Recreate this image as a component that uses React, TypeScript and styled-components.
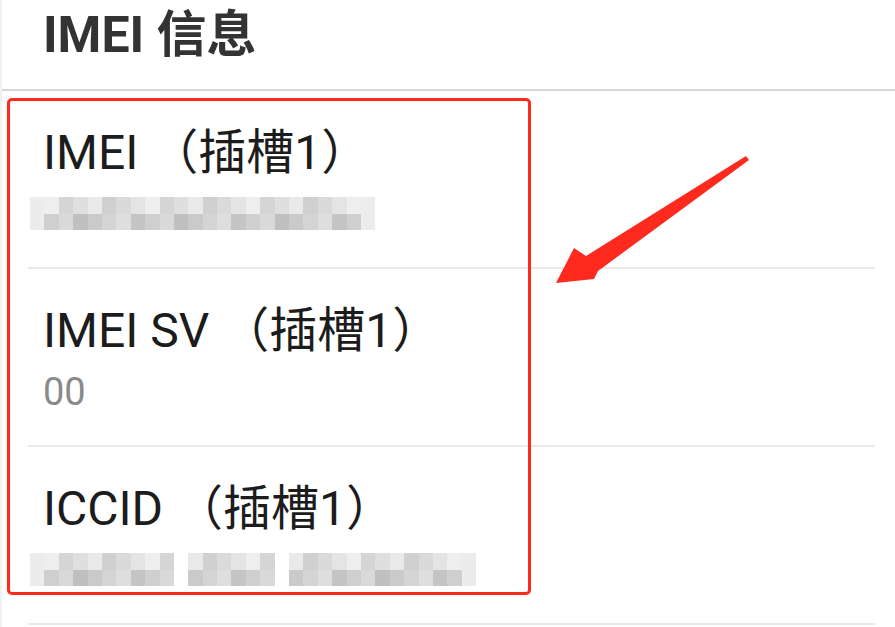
import styled, { createGlobalStyle } from 'styled-components';

const Global = createGlobalStyle`
  html, body { margin: 0; padding: 0; background: #fff; }
  body { font-family: Roboto, "Noto Sans CJK SC", sans-serif; }
`;

const Page = styled.div`
  position: relative;
  width: 895px;
  height: 627px;
  overflow: hidden;
  background: #fff;
  border-left: 2px solid #f2f2f2;
  box-sizing: border-box;
`;

const Header = styled.header`
  height: 89px;
  border-bottom: 2px solid #d6d6d6;
  padding-left: 41px;
  box-sizing: content-box;
  display: flex;
  align-items: flex-start;
`;

const Title = styled.h1`
  margin: 0;
  padding-top: 10px;
  font-size: 50px;
  line-height: 1;
  font-weight: 700;
  color: #333;
`;

const List = styled.div`
  display: flex;
  flex-direction: column;
`;

const Row = styled.div`
  height: 178px;
  box-sizing: border-box;
  margin: 0 20px 0 26px;
  padding: 38px 0 0 15px;
  border-bottom: 2px solid #e9e9e9;
  display: flex;
  flex-direction: column;
  gap: 20px;
`;

const RowTitle = styled.div`
  font-size: 48px;
  line-height: 1;
  color: #1c1c1c;
`;

const RowValue = styled.div`
  font-size: 38px;
  line-height: 1;
  color: #8a8a8a;
  margin-top: -2px;
`;

const Mosaic = styled.div<{ $cols: number }>`
  display: grid;
  grid-template-columns: repeat(${({ $cols }) => $cols}, 14.4px);
  grid-auto-rows: 16.5px;
  margin-left: -13px;
  filter: blur(0.6px);
`;

const Cell = styled.span`
  display: block;
`;

const Highlight = styled.div`
  position: absolute;
  left: 5px;
  top: 98px;
  width: 524px;
  height: 497px;
  box-sizing: border-box;
  border: 3px solid #fe2a1e;
  border-radius: 5px;
  pointer-events: none;
`;

const Arrow = styled.svg`
  position: absolute;
  left: 550px;
  top: 150px;
  width: 200px;
  height: 140px;
`;

function shadeFor(i: number, r: number, cols: number, gaps: number[]) {
  if (gaps.includes(i)) return '#ffffff';
  const base = r === 0 ? 222 : 206;
  const jitter = ((i * 37 + r * 53 + 11) % 7) * 5 - 14;
  let v = base + jitter;
  if (i === 0 || i === cols - 1) v = Math.max(v, 236);
  v = Math.min(245, Math.max(188, v));
  return `rgb(${v},${v},${v})`;
}

function Pixelated({ cols, gaps = [] }: { cols: number; gaps?: number[] }) {
  const cells = [];
  for (let r = 0; r < 2; r++) {
    for (let i = 0; i < cols; i++) {
      cells.push(<Cell key={`${r}-${i}`} style={{ background: shadeFor(i, r, cols, gaps) }} />);
    }
  }
  return <Mosaic $cols={cols}>{cells}</Mosaic>;
}

export default function App() {
  return (
    <>
      <Global />
      <Page>
        <Header>
          <Title>IMEI 信息</Title>
        </Header>
        <List>
          <Row>
            <RowTitle>IMEI （插槽1）</RowTitle>
            <Pixelated cols={24} />
          </Row>
          <Row>
            <RowTitle>IMEI SV （插槽1）</RowTitle>
            <RowValue>00</RowValue>
          </Row>
          <Row>
            <RowTitle>ICCID （插槽1）</RowTitle>
            <Pixelated cols={31} gaps={[10, 17]} />
          </Row>
        </List>
        <Highlight />
        <Arrow viewBox="550 150 200 140">
          <polygon
            fill="#fe2a1e"
            points="554,283 572,248 584,256 744,156 747,160 596,271 592,279"
          />
        </Arrow>
      </Page>
    </>
  );
}
